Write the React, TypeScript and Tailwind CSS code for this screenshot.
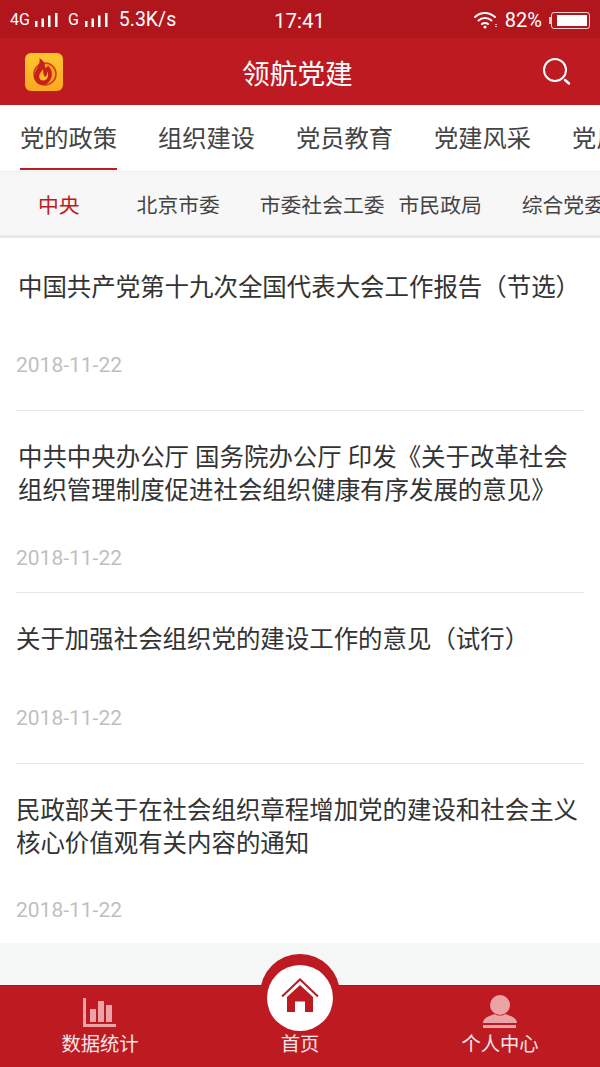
const articles = [
  { lines: ['中国共产党第十九次全国代表大会工作报告（节选）'], h: 'h-[172px]', pt: 'pt-[33px]', gap: 'mt-[47px]', indent: 'pl-[2px]' },
  { lines: ['中共中央办公厅 国务院办公厅 印发《关于改革社会', '组织管理制度促进社会组织健康有序发展的意见》'], h: 'h-[181px]', pt: 'pt-[30px]', gap: 'mt-[37px]', indent: 'pl-[2px]' },
  { lines: ['关于加强社会组织党的建设工作的意见（试行）'], h: 'h-[170px]', pt: 'pt-[30px]', gap: 'mt-[48px]', indent: 'pl-0' },
  { lines: ['民政部关于在社会组织章程增加党的建设和社会主义', '核心价值观有关内容的通知'], h: 'h-[179px]', pt: 'pt-[30px]', gap: 'mt-[36px]', indent: 'pl-0' },
];

function Bars({ className }: { className?: string }) {
  return (
    <svg width="23" height="16" viewBox="0 0 23 16" className={className} fill="white">
      <rect x="0" y="9" width="2.500" height="6" />
      <rect x="6.500" y="6.500" width="2.500" height="8.500" />
      <rect x="13" y="3.500" width="2.500" height="11.500" />
      <rect x="20" y="1" width="2.500" height="14" />
    </svg>
  );
}

function StatusBar() {
  return (
    <div className="h-[38px] bg-[#b2161d] flex items-center text-white relative shrink-0">
      <div className="flex items-center pl-[10px] pt-[2px]">
        <span className="text-[16px] leading-none">4G</span>
        <Bars className="ml-[5px]" />
        <span className="text-[16px] leading-none ml-[10px]">G</span>
        <Bars className="ml-[6px]" />
        <span className="text-[19.500px] leading-none ml-[11px]">5.3K/s</span>
      </div>
      <span className="absolute left-[274px] top-[11px] text-[20.500px] leading-none">17:41</span>
      <div className="ml-auto flex items-center pr-[10px] pt-[2px]">
        <svg width="25" height="20" viewBox="0 0 25 20" fill="none" stroke="white" strokeWidth="2" strokeLinecap="round">
          <path d="M2 7C7.500 1.500 16 1.500 22 7" />
          <path d="M5.500 10.500C9 7 15 7 18.500 10.500" />
          <path d="M9 14C10.500 12.500 13.500 12.500 15 14" />
          <circle cx="12" cy="17" r="1.500" fill="white" stroke="none" />
          <path d="M23 14V18" strokeWidth="1.500" strokeDasharray="1 1" strokeLinecap="butt" />
        </svg>
        <span className="text-[20px] leading-none ml-[7px]">82%</span>
        <div className="ml-[9px] w-[39px] h-[17px] rounded-[3px] border border-white/80 p-[2px] relative">
          <div className="h-full w-[30px] ml-auto bg-white" />
          <div className="absolute -left-[3px] top-[4px] w-[2px] h-[7px] bg-white/80" />
        </div>
      </div>
    </div>
  );
}

function AppLogo() {
  return (
    <div className="w-[38px] h-[38px] rounded-[6px] bg-gradient-to-b from-[#fdc62f] to-[#fda81f]">
      <svg width="38" height="38" viewBox="0 0 38 38">
        <circle cx="20" cy="21" r="11" fill="#f8a321" stroke="#cf3a1c" strokeWidth="1.500" />
        <path d="M18 32C12 32 8.500 27.500 9.500 22C10.500 16 15.500 13 14.500 5C19 8 20.500 11.500 20 15C21.500 14.500 22.500 14 23 12.500C26.500 16 27.500 20 26.500 24C25 29 22 32 18 32Z" fill="#c8201b" />
        <path d="M18 27.500C15 27.500 13.500 24.500 14.500 21.500C15.500 19 17.500 18 18 16C18.500 19 18 22 20 24C22 22.500 22.500 20.500 22 18.500C24 21 23.500 27.500 18 27.500Z" fill="#fdb52a" />
      </svg>
    </div>
  );
}

function Header() {
  return (
    <div className="h-[67px] bg-[#bd1a21] flex items-center justify-between pl-[25px] pr-[28px] shrink-0 relative">
      <AppLogo />
      <span className="absolute left-[242px] top-[20px] text-[27.700px] leading-[34px] text-white whitespace-nowrap">领航党建</span>
      <svg width="30" height="30" viewBox="0 0 30 30" fill="none" stroke="white" strokeLinecap="round" className="mt-[1px]">
        <circle cx="13" cy="13" r="11" strokeWidth="2" />
        <path d="M23 23L27 26.500" strokeWidth="2.500" />
      </svg>
    </div>
  );
}

function MainTabs() {
  const tabs = ['党的政策', '组织建设', '党员教育', '党建风采', '党风廉政'];
  return (
    <div className="h-[66px] bg-white flex overflow-hidden shrink-0 pl-[20px] gap-[41px]">
      {tabs.map((t, i) => (
        <div key={t} className="relative shrink-0 w-[97px] pt-[18px] text-[24.250px] leading-[32px] text-[#444444] whitespace-nowrap">
          {t}
          {i === 0 && <div className="absolute left-0 right-0 top-[63px] h-[2px] bg-[#bd1a21]" />}
        </div>
      ))}
    </div>
  );
}

function SubTabs() {
  const tabs = [
    { t: '中央', x: 'ml-[38px]', on: true },
    { t: '北京市委', x: 'ml-[57px]' },
    { t: '市委社会工委', x: 'ml-[40px]' },
    { t: '市民政局', x: 'ml-[14px]' },
    { t: '综合党委', x: 'ml-[40px]' },
  ];
  return (
    <div className="h-[67px] bg-[#f7f7f7] border-t border-[#ececec] border-b-[3px] border-b-[#e9e9e9] flex items-center overflow-hidden shrink-0 text-[20.800px] leading-[28px] pt-[5px]">
      {tabs.map((s) => (
        <span key={s.t} className={`shrink-0 whitespace-nowrap ${s.x} ${s.on ? 'text-[#bd1a21]' : 'text-[#444444]'}`}>{s.t}</span>
      ))}
    </div>
  );
}

function ArticleList() {
  return (
    <div className="bg-white shrink-0">
      {articles.map((a, i) => (
        <div key={i} className="mx-[16px] border-b border-[#e6e6e6] last:border-b-0">
          <div className={`${a.h} ${a.pt}`}>
            {a.lines.map((l) => (
              <div key={l} className={`${a.indent} text-[24.450px] leading-[33px] text-[#333333] whitespace-nowrap`}>{l}</div>
            ))}
            <div className={`${a.gap} text-[21px] leading-[28px] text-[#bfbfbf]`}>2018-11-22</div>
          </div>
        </div>
      ))}
    </div>
  );
}

function BottomBar() {
  return (
    <div className="relative h-[124px] bg-[#f5f6f6] shrink-0">
      <div className="absolute left-0 right-0 top-[42px] h-[82px] bg-[#bd1a21] border-t border-[#a8141a] flex">
        <div className="w-[200px] flex flex-col items-center pt-[12px]">
          <svg width="34" height="30" viewBox="0 0 34 30" fill="#eba3a6">
            <rect x="0" y="0" width="3" height="29" />
            <rect x="0" y="26" width="33" height="3" />
            <rect x="7" y="11" width="6" height="13" />
            <rect x="15" y="3" width="6" height="21" />
            <rect x="23" y="7" width="6" height="17" />
          </svg>
          <span className="mt-[5px] text-[19.300px] leading-[24px] text-white/90">数据统计</span>
        </div>
        <div className="w-[200px] flex flex-col items-center pt-[47px]">
          <span className="text-[19.300px] leading-[24px] text-white/90">首页</span>
        </div>
        <div className="w-[200px] flex flex-col items-center pt-[9px]">
          <svg width="34" height="34" viewBox="0 0 34 34" fill="#eba3a6">
            <circle cx="17" cy="10" r="10" />
            <path d="M0 28C0 23 6 21 12 19C14 21 20 21 22 19C28 21 34 23 34 28Z" />
            <rect x="0" y="30" width="33" height="3" />
          </svg>
          <span className="mt-[4px] text-[19.300px] leading-[24px] text-white/90">个人中心</span>
        </div>
      </div>
      <div className="absolute left-[260px] top-[11px] w-[80px] h-[80px] rounded-full bg-[#bd1a21] flex justify-center pt-[11px]">
        <div className="w-[66px] h-[66px] rounded-full bg-white flex items-center justify-center">
          <svg width="38" height="34" viewBox="0 0 38 34" fill="#bd1a21" className="mb-[7px]">
            <path d="M1 18.500L19 1.500L37 18.500" fill="none" stroke="#bd1a21" strokeWidth="2" />
            <path d="M19 7L32 19V34H24V23.500H14V34H6V19Z" />
          </svg>
        </div>
      </div>
    </div>
  );
}

export default function App() {
  return (
    <div className="w-[600px] h-[1067px] overflow-hidden flex flex-col bg-white font-['Roboto','Noto_Sans_CJK_SC',sans-serif]">
      <StatusBar />
      <Header />
      <MainTabs />
      <SubTabs />
      <ArticleList />
      <BottomBar />
    </div>
  );
}
